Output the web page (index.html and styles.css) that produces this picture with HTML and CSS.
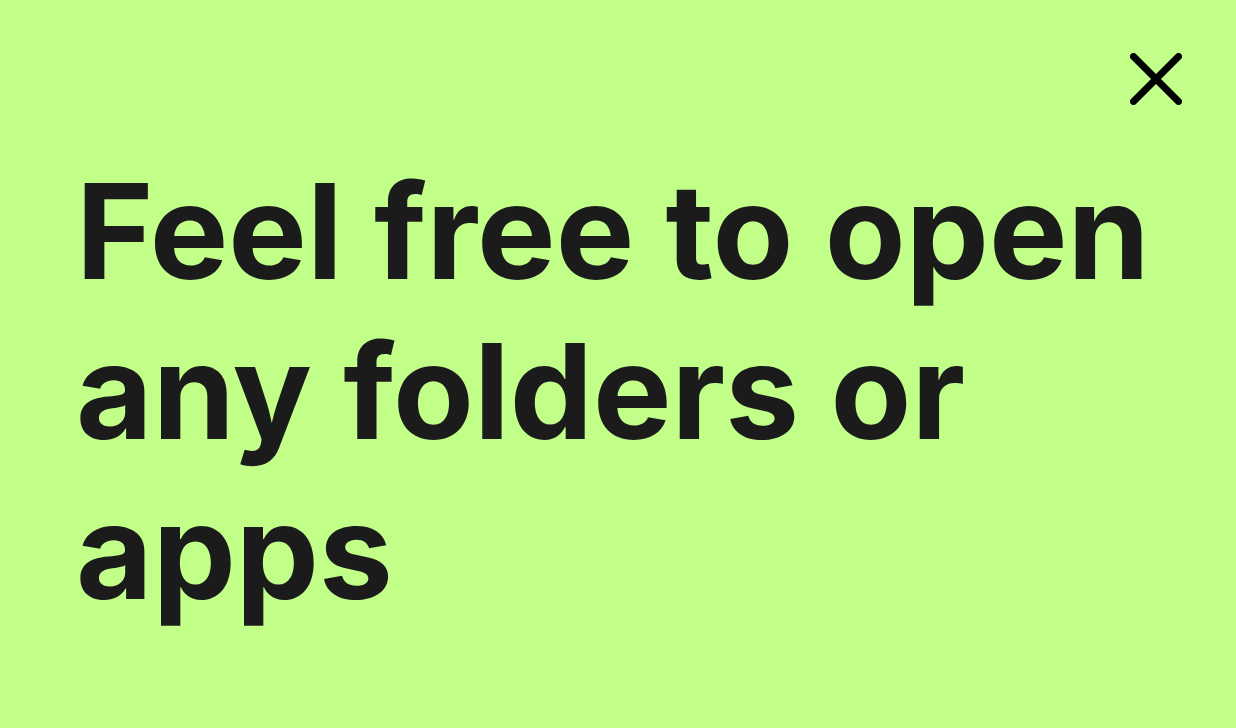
FILE: index.html
```html
<!DOCTYPE html>
<html lang="en">
<head>
  <meta charset="UTF-8">
  <meta name="viewport" content="width=device-width, initial-scale=1.0">
  <title>Tip</title>
  <link rel="stylesheet" href="styles.css">
</head>
<body>
  <div class="panel">
    <div class="top-bar">
      <button class="close-btn" aria-label="Close">
        <svg viewBox="0 0 52 52"><path d="M3.5 3.5L48.5 48.5M48.5 3.5L3.5 48.5"/></svg>
      </button>
    </div>
    <h1 class="message">Feel free to open any folders or apps</h1>
  </div>
</body>
</html>
```

FILE: styles.css
```css
html, body {
  margin: 0;
  height: 100%;
}
body {
  background-color: #c1ff89;
  color: #1b1b1b;
  font-family: Inter, "Noto Sans", sans-serif;
}
.panel {
  display: flex;
  flex-direction: column;
  height: 100%;
  box-sizing: border-box;
  padding: 53px 54px 0 76px;
}
.top-bar {
  display: flex;
  justify-content: flex-end;
}
.close-btn {
  background: none;
  border: none;
  padding: 0;
  cursor: pointer;
  display: flex;
}
.close-btn svg {
  width: 52px;
  height: 52px;
  fill: none;
  stroke: #000;
  stroke-width: 7;
  stroke-linecap: round;
}
.message {
  margin: 46px 0 0;
  font-size: 132px;
  font-weight: 700;
  line-height: 160px;
  max-width: 1100px;
}
```
